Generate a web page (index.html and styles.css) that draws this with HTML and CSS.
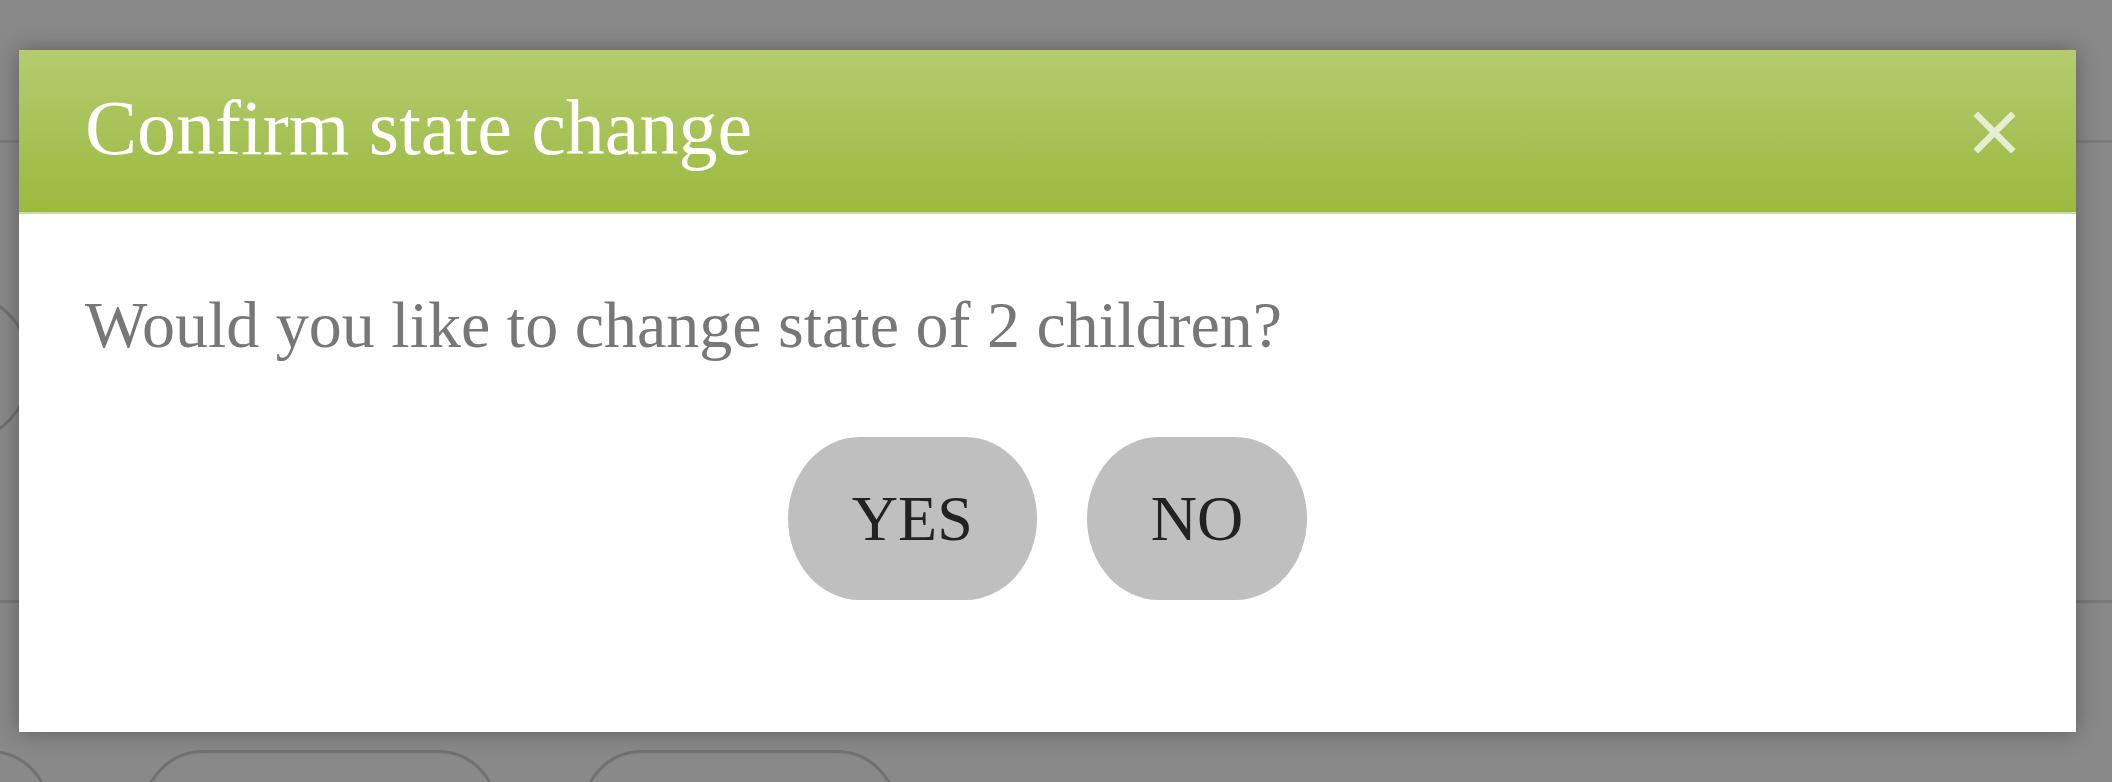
FILE: index.html
```html
<!DOCTYPE html>
<html lang="en">
<head>
<meta charset="utf-8">
<title>Confirm state change</title>
<link rel="stylesheet" href="styles.css">
</head>
<body>
<div class="page">
  <div class="topbar"></div>
  <div class="middle">
    <div class="row">
      <div class="ghost-pill"><span class="ghost-mark"></span></div>
    </div>
  </div>
  <div class="bottomrow">
    <div class="ghost-btn ghost-btn-a"></div>
    <div class="ghost-btn ghost-btn-b"></div>
    <div class="ghost-btn ghost-btn-c"></div>
  </div>
</div>

<div class="dialog" role="dialog" aria-labelledby="dlg-title">
  <div class="dialog-header">
    <h1 id="dlg-title" class="dialog-title">Confirm state change</h1>
    <button class="dialog-close" aria-label="Close">
      <svg width="43" height="41" viewBox="0 0 43 41" aria-hidden="true">
        <path d="M5 4 L38 37 M38 4 L5 37" stroke="#e6eed2" stroke-width="6.5" stroke-linecap="square" fill="none"/>
      </svg>
    </button>
  </div>
  <div class="dialog-body">
    <p class="dialog-message">Would you like to change state of 2 children?</p>
    <div class="dialog-actions">
      <button class="btn">YES</button>
      <button class="btn">NO</button>
    </div>
  </div>
</div>
</body>
</html>
```

FILE: styles.css
```css
html, body {
  margin: 0;
  padding: 0;
  height: 100%;
}

body {
  background: #898989;
  overflow: hidden;
  font-family: "Liberation Serif", "Times New Roman", serif;
  position: relative;
}

.page {
  display: flex;
  flex-direction: column;
  height: 782px;
  overflow: hidden;
}

.topbar {
  height: 140px;
  flex: none;
  border-bottom: 3px solid #7b7b7b;
}

.middle {
  height: 607px;
  flex: none;
}

.row {
  height: 457px;
  border-bottom: 3px solid #787878;
  display: flex;
  align-items: flex-start;
}

.ghost-pill {
  margin-top: 147px;
  margin-left: -200px;
  width: 232px;
  height: 155px;
  border: 3px solid #707070;
  border-radius: 78px;
  display: flex;
  align-items: center;
  justify-content: flex-end;
  padding-right: 226px;
  box-sizing: border-box;
  flex: none;
}

.ghost-mark {
  display: block;
  width: 6px;
  height: 22px;
  border-radius: 3px;
  background: #5e5e5e;
}

.bottomrow {
  display: flex;
  height: 32px;
  flex: none;
  overflow: hidden;
}

.ghost-btn {
  height: 120px;
  border: 3px solid #717171;
  border-radius: 70px;
  box-sizing: border-box;
  flex: none;
}

.ghost-btn-a {
  width: 250px;
  margin-left: -200px;
}

.ghost-btn-b {
  width: 355px;
  margin-left: 93px;
}

.ghost-btn-c {
  width: 315px;
  margin-left: 84px;
}

/* modal dialog, lying over the page */
.dialog {
  position: absolute;
  left: 19px;
  top: 50px;
  width: 2057px;
  height: 682px;
  background: #ffffff;
  box-shadow: 0 0 22px rgba(0, 0, 0, 0.32);
  display: flex;
  flex-direction: column;
}

.dialog-header {
  height: 164px;
  box-sizing: border-box;
  background: linear-gradient(to bottom, #b4cc6f 0%, #a7c257 50%, #9bba3d 100%);
  border-bottom: 2px solid #c9dca0;
  display: flex;
  align-items: flex-start;
  justify-content: space-between;
  padding: 39px 60px 0 66px;
}

.dialog-title {
  margin: 0;
  font-weight: normal;
  font-size: 78px;
  line-height: 78px;
  color: #ffffff;
}

.dialog-close {
  margin-top: 23px;
  padding: 0;
  border: 0;
  background: none;
  width: 43px;
  height: 41px;
  display: block;
  cursor: pointer;
}

.dialog-close svg {
  display: block;
}

.dialog-body {
  flex: 1;
  padding: 78px 66px 0 66px;
  display: flex;
  flex-direction: column;
}

.dialog-message {
  margin: 0;
  font-size: 66px;
  line-height: 66px;
  color: #777777;
}

.dialog-actions {
  margin-top: 79px;
  display: flex;
  justify-content: center;
  gap: 50px;
}

.btn {
  height: 163px;
  padding: 0 64px;
  border: 0;
  border-radius: 72px / 82px;
  background: #bfbfbf;
  color: #222222;
  font-family: "Liberation Serif", "Times New Roman", serif;
  font-size: 64px;
  line-height: 64px;
  cursor: pointer;
}
```
